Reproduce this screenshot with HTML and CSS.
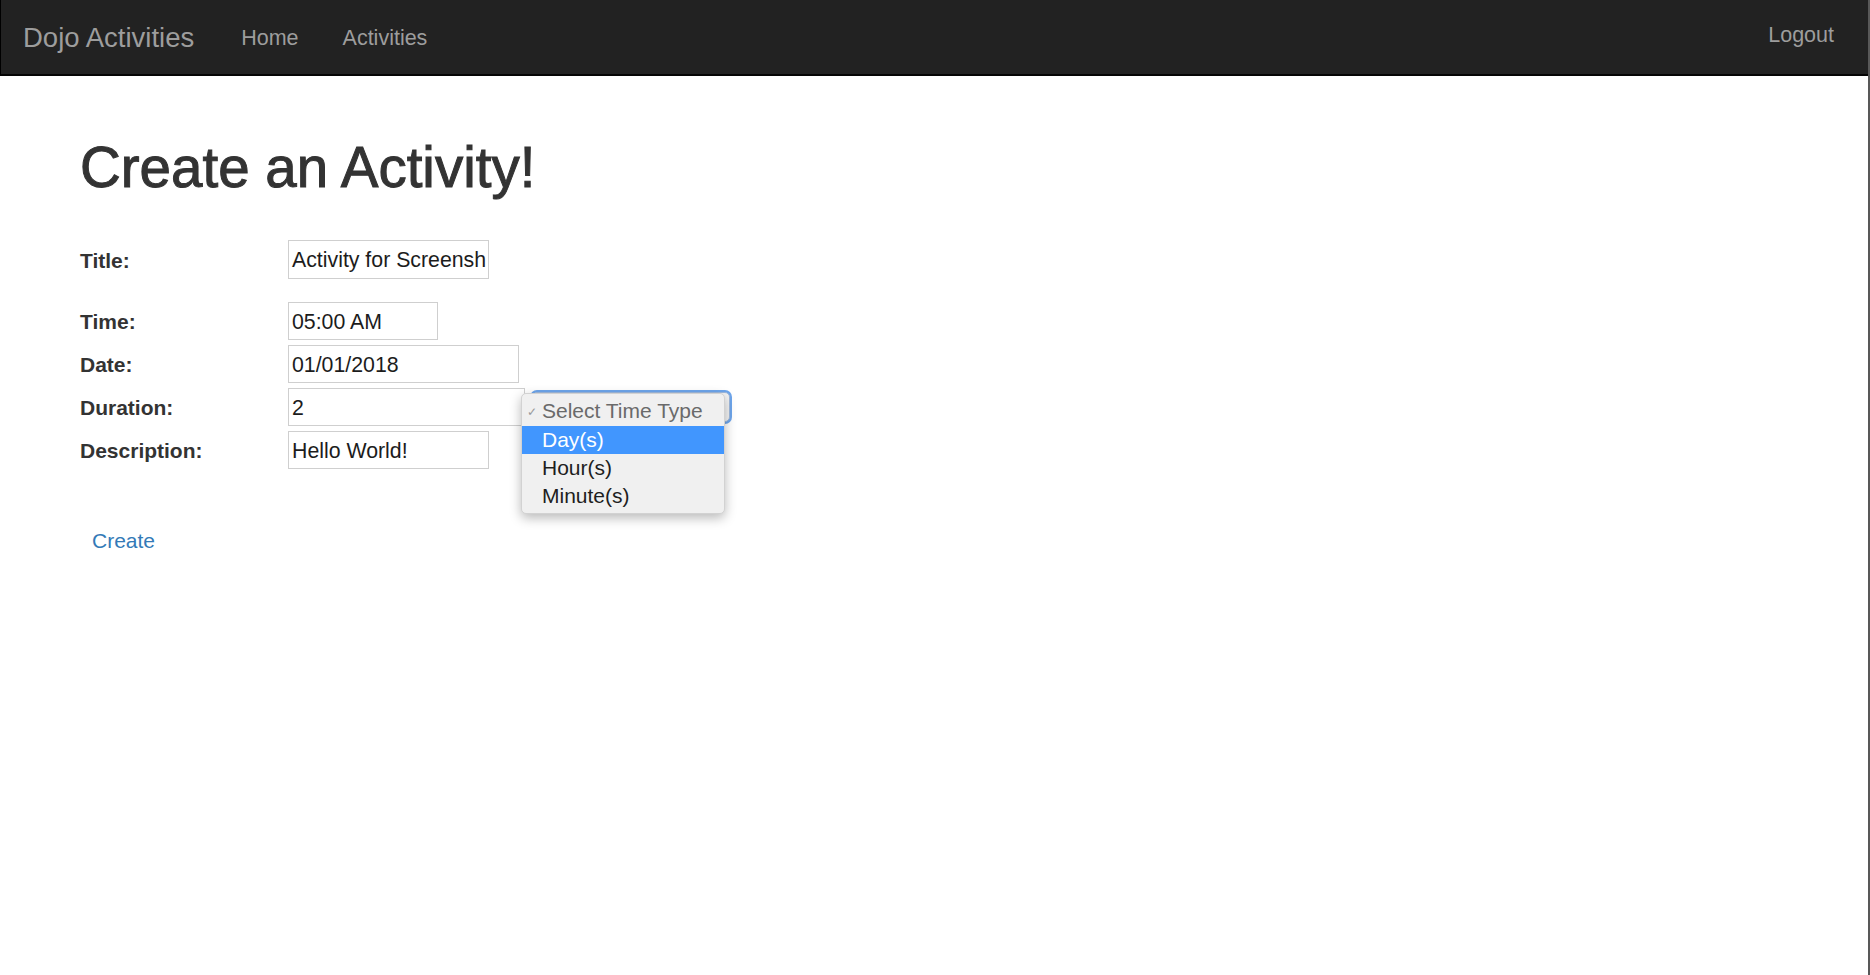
FILE: index.html
```html
<!DOCTYPE html>
<html lang="en">
<head>
<meta charset="utf-8">
<title>Dojo Activities</title>
<link rel="stylesheet" href="styles.css">
</head>
<body>
<div class="page">
  <nav class="navbar">
    <a class="brand" href="#">Dojo Activities</a>
    <a class="nav-link" href="#">Home</a>
    <a class="nav-link" href="#">Activities</a>
    <a class="nav-link logout" href="#">Logout</a>
  </nav>
  <main class="content">
    <h1 class="heading">Create an Activity!</h1>
    <form class="form">
      <div class="row row-title">
        <label class="label">Title:</label>
        <div class="input input-title">Activity for Screensh</div>
      </div>
      <div class="row">
        <label class="label">Time:</label>
        <div class="input input-time">05:00 AM</div>
      </div>
      <div class="row">
        <label class="label">Date:</label>
        <div class="input input-date">01/01/2018</div>
      </div>
      <div class="row">
        <label class="label">Duration:</label>
        <div class="input input-duration">2</div>
        <div class="select">
          <div class="popup">
            <div class="option option-placeholder"><span class="check">✓</span>Select Time Type</div>
            <div class="option option-active">Day(s)</div>
            <div class="option">Hour(s)</div>
            <div class="option">Minute(s)</div>
          </div>
        </div>
      </div>
      <div class="row">
        <label class="label">Description:</label>
        <div class="input input-desc">Hello World!</div>
      </div>
      <a class="create" href="#">Create</a>
    </form>
  </main>
</div>
</body>
</html>
```
FILE: styles.css
```css
html, body {
  margin: 0;
  padding: 0;
  background: #fff;
  font-family: "Liberation Sans", Arial, Helvetica, sans-serif;
}

.page {
  min-height: 100vh;
  box-sizing: border-box;
  border-right: 2px solid #585858;
}

.navbar {
  display: flex;
  align-items: flex-start;
  height: 74px;
  background: #222;
  border-bottom: 2px solid #050505;
  border-left: 1px solid #000;
  padding-left: 22px;
  padding-right: 34px;
}

.navbar a {
  color: #9d9d9d;
  text-decoration: none;
  line-height: 1.15;
}

.brand {
  font-size: 27.5px;
  padding-top: 22px;
  margin-right: 25px;
}

.nav-link {
  font-size: 21.5px;
  padding: 26px 22px 0 22px;
}

.logout {
  margin-left: auto;
  padding: 23px 0 0 0;
}

.content {
  padding: 61px 0 0 80px;
}

.heading {
  margin: 0 0 41px 0;
  font-size: 56.5px;
  line-height: 62px;
  font-weight: 400;
  color: #333;
  -webkit-text-stroke: 1px #333;
}

.form {
  display: flex;
  flex-direction: column;
}

.row {
  display: flex;
  align-items: center;
  margin-bottom: 5px;
}

.row-title {
  margin-bottom: 23px;
}

.label {
  width: 208px;
  padding-top: 2px;
  font-size: 21px;
  font-weight: 700;
  color: #333;
}

.input {
  box-sizing: border-box;
  height: 38px;
  border: 1px solid #cfcfcf;
  padding: 2px 3px 0 3px;
  font-size: 21.3px;
  line-height: 35px;
  color: #1c1c1c;
  white-space: nowrap;
  overflow: hidden;
}

.input-title { width: 201px; height: 39px; }
.input-time { width: 150px; }
.input-date { width: 231px; }
.input-duration { width: 237px; }
.input-desc { width: 201px; }

.select {
  position: relative;
  box-sizing: border-box;
  width: 198px;
  height: 30px;
  margin-left: 7px;
  border: 1px solid #9fb9dd;
  border-radius: 5px;
  background: #f4f4f4;
  box-shadow: 0 0 0 2px #6ea6ec;
}

.popup {
  position: absolute;
  left: -12px;
  top: 0;
  width: 204px;
  box-sizing: border-box;
  padding: 4px 0 3px 0;
  background: #f0f0f0;
  border: 1px solid #d2d2d2;
  border-radius: 5px;
  box-shadow: 0 4px 12px rgba(0, 0, 0, 0.28);
  z-index: 2;
}

.option {
  position: relative;
  height: 28px;
  line-height: 28px;
  padding-left: 20px;
  font-size: 21px;
  color: #1e1e1e;
  white-space: nowrap;
}

.option-placeholder {
  color: #6a6a6a;
  line-height: 26px;
}

.check {
  position: absolute;
  left: 5px;
  top: 1px;
  font-size: 12px;
  color: #9a9a9a;
}

.option-active {
  background: #4196fe;
  color: #fff;
}

.create {
  align-self: flex-start;
  margin: 55px 0 0 12px;
  font-size: 21px;
  color: #337ab7;
  text-decoration: none;
}
```
